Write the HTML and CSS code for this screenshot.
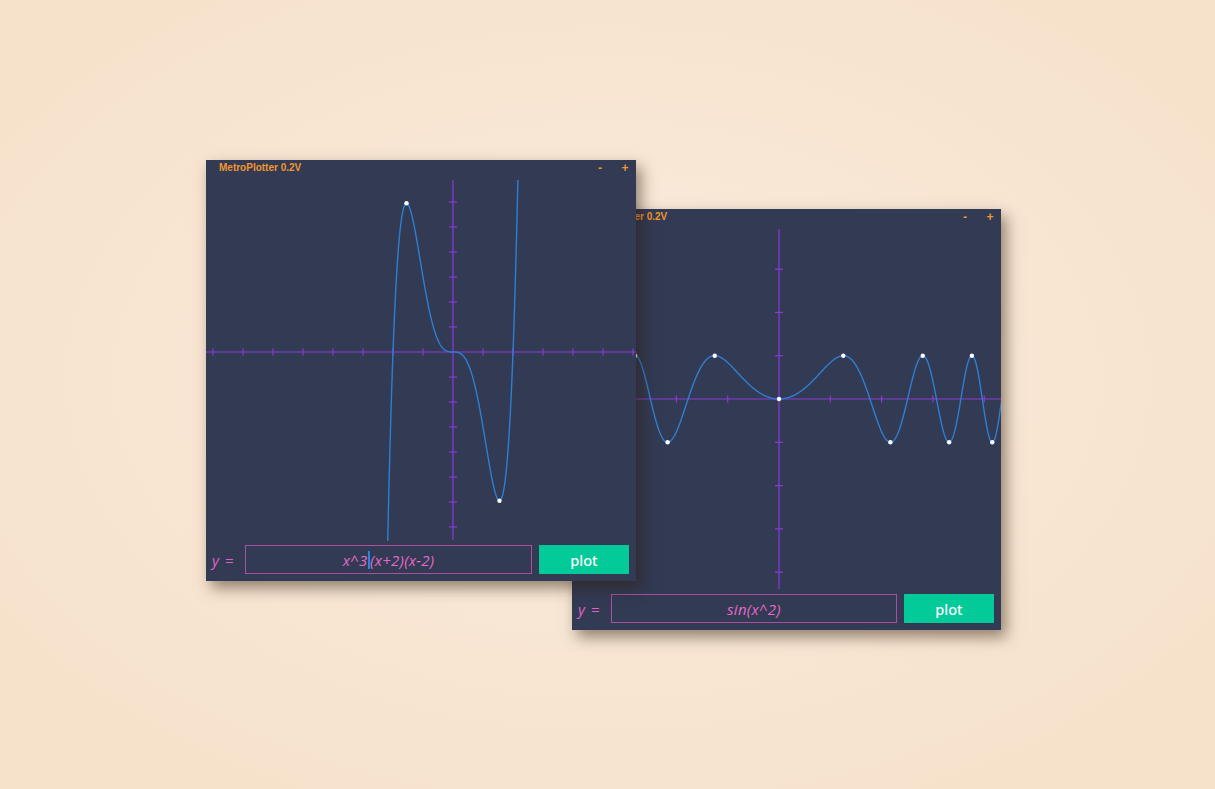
FILE: index.html
```html
<!DOCTYPE html>
<html lang="en">
<head>
<meta charset="utf-8">
<title>MetroPlotter 0.2V</title>
<link rel="stylesheet" href="styles.css">
</head>
<body>
<div class="desk">
  <div class="window win-b">
    <div class="titlebar">
      <span class="title">MetroPlotter 0.2V</span>
      <span class="ctrls"><span class="ctrl">-</span><span class="ctrl">+</span></span>
    </div>
    <svg class="plot" width="429" height="362" viewBox="0 0 429 362" data-w="429" data-fn="sinsq" data-ox="207" data-oy="170" data-sx="51.3" data-sy="43.3"></svg>
    <div class="inputrow">
      <span class="label">y =</span>
      <div class="field">sin(x^2)</div>
      <div class="btn">plot</div>
    </div>
  </div>

  <div class="window win-a">
    <div class="titlebar">
      <span class="title">MetroPlotter 0.2V</span>
      <span class="ctrls"><span class="ctrl">-</span><span class="ctrl">+</span></span>
    </div>
    <svg class="plot" width="430" height="362" viewBox="0 0 430 362" data-w="430" data-fn="quintic" data-ox="247" data-oy="172" data-sx="30" data-sy="25"></svg>
    <div class="inputrow">
      <span class="label">y =</span>
      <div class="field">x^3<span class="caret"></span>(x+2)(x-2)</div>
      <div class="btn">plot</div>
    </div>
  </div>
</div>
<script src="script.js"></script>
</body>
</html>
```

FILE: styles.css
```css
html, body {
  margin: 0;
  padding: 0;
}

.desk {
  position: relative;
  width: 1215px;
  height: 789px;
  overflow: hidden;
  background: radial-gradient(ellipse 65% 65% at 50% 48%, #faecdd 0%, #f8e6d3 55%, #f6e1ca 100%);
}

.window {
  position: absolute;
  width: 430px;
  height: 421px;
  background: #323a54;
  display: flex;
  flex-direction: column;
  box-shadow: 5px 7px 14px rgba(45, 28, 10, 0.5);
}

.win-a {
  left: 206px;
  top: 160px;
  z-index: 2;
}

.win-b {
  left: 572px;
  top: 209px;
  width: 429px;
  z-index: 1;
}

.titlebar {
  height: 20px;
  display: flex;
  align-items: flex-start;
  padding: 0 1px 0 13px;
  box-sizing: border-box;
  color: #f0962c;
  font-family: "Liberation Sans", Arial, sans-serif;
  font-weight: bold;
  font-size: 10px;
  line-height: 16px;
}

.title {
  flex: 1;
}

.ctrls {
  display: flex;
  gap: 5px;
}

.ctrl {
  width: 20px;
  text-align: center;
  font-size: 12px;
  font-weight: bold;
}

.plot {
  display: block;
  height: 362px;
}

.inputrow {
  display: flex;
  align-items: center;
  height: 29px;
  margin-top: 3px;
  padding: 0 7px 0 6px;
}

.label {
  width: 33px;
  color: #e063c2;
  font-family: "Open Sans", "Noto Sans", sans-serif;
  font-style: italic;
  font-size: 15px;
  word-spacing: 2px;
}

.field {
  flex: 1;
  height: 29px;
  box-sizing: border-box;
  border: 1.5px solid #a9509f;
  margin-right: 7px;
  display: flex;
  align-items: center;
  justify-content: center;
  color: #e46ac8;
  font-family: "Open Sans", "Noto Sans", sans-serif;
  font-style: italic;
  font-weight: 400;
  font-size: 15px;
  letter-spacing: 0.3px;
  white-space: pre;
}

.caret {
  display: inline-block;
  width: 1.5px;
  height: 18px;
  background: #2b86e0;
  margin: 0 0.5px;
}

.btn {
  width: 90px;
  height: 29px;
  background: #02ca99;
  color: #ffffff;
  display: flex;
  align-items: center;
  justify-content: center;
  font-family: "Noto Sans", sans-serif;
  font-weight: 500;
  font-size: 14.5px;
}
```

FILE: script.js
```js
(function () {
  var NS = "http://www.w3.org/2000/svg";
  var fns = {
    quintic: function (x) { return Math.pow(x, 5) - 4 * Math.pow(x, 3); },
    sinsq: function (x) { return Math.sin(x * x); }
  };
  var AXIS = "#8b3ad4";
  var CURVE = "#2e7fd2";

  function el(name, attrs, parent) {
    var e = document.createElementNS(NS, name);
    for (var k in attrs) e.setAttribute(k, attrs[k]);
    parent.appendChild(e);
    return e;
  }

  var plots = document.querySelectorAll("svg.plot");
  for (var p = 0; p < plots.length; p++) {
    var svg = plots[p];
    var f = fns[svg.getAttribute("data-fn")];
    var ox = parseFloat(svg.getAttribute("data-ox"));
    var oy = parseFloat(svg.getAttribute("data-oy"));
    var sx = parseFloat(svg.getAttribute("data-sx"));
    var sy = parseFloat(svg.getAttribute("data-sy"));
    var W = parseFloat(svg.getAttribute("data-w")), H = 362, top = 0, bottom = 361;
    var id = "clip" + p;
    var defs = el("defs", {}, svg);
    var cp = el("clipPath", { id: id }, defs);
    el("rect", { x: 0, y: top, width: W, height: bottom - top }, cp);

    var g = el("g", { "clip-path": "url(#" + id + ")" }, svg);

    el("line", { x1: 0, y1: oy, x2: W, y2: oy, stroke: AXIS, "stroke-width": 1.2 }, g);
    el("line", { x1: ox, y1: top, x2: ox, y2: bottom - 1, stroke: AXIS, "stroke-width": 1.2 }, g);
    var k, t;
    for (k = -20; k <= 20; k++) {
      if (k === 0) continue;
      t = ox + k * sx;
      if (t > 0 && t < W) el("line", { x1: t, y1: oy - 3.5, x2: t, y2: oy + 3.5, stroke: AXIS, "stroke-width": 1.2 }, g);
      t = oy + k * sy;
      if (t > top + 2 && t < bottom - 2) el("line", { x1: ox - 4, y1: t, x2: ox + 4, y2: t, stroke: AXIS, "stroke-width": 1.2 }, g);
    }

    var d = "";
    for (var px = -1; px <= W + 1; px += 0.5) {
      var x = (px - ox) / sx;
      var py = oy - f(x) * sy;
      if (py < -60) py = -60;
      if (py > H + 60) py = H + 60;
      d += (d ? "L" : "M") + px.toFixed(2) + " " + py.toFixed(2);
    }
    el("path", { d: d, fill: "none", stroke: CURVE, "stroke-width": 1.4, "stroke-linejoin": "round" }, g);

    var x0 = (0 - ox) / sx, x1 = (W - ox) / sx, step = 0.0005;
    var n = Math.ceil((x1 - x0) / step);
    var prev = f(x0), cur = f(x0 + step), next;
    for (var i = 1; i < n; i++) {
      var xi = x0 + i * step;
      next = f(xi + step);
      var a = cur - prev, b = next - cur;
      if (a * b < 0) {
        var cx = ox + xi * sx, cy = oy - cur * sy;
        if (cy > top + 2 && cy < bottom - 2 && cx > 1 && cx < W - 1) {
          el("circle", { cx: cx.toFixed(2), cy: cy.toFixed(2), r: 2.2, fill: "#ffffff" }, g);
        }
      }
      prev = cur; cur = next;
    }
  }
})();
```
